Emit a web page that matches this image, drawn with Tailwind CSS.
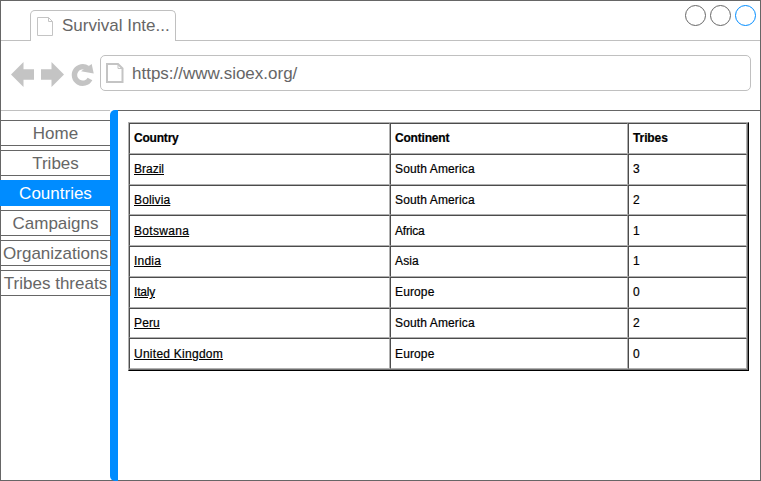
<!DOCTYPE html>
<html lang="en"><head><meta charset="utf-8"><title>Survival International</title>
<script src="https://cdn.jsdelivr.net/npm/@tailwindcss/browser@4"></script></head>
<body class="bg-white">
<div class="flex h-[481px] w-[761px] flex-col border border-[#666] font-['Liberation_Sans',Arial,sans-serif] text-[17px] text-[#666]">
  <header class="flex h-[40px] shrink-0 items-end">
    <div class="h-full w-[29px] border-b border-[#c0c0c0]"></div>
    <div class="flex h-[31px] w-[146px] items-start rounded-t-[5px] border border-b-0 border-[#c0c0c0] pt-[6px] pl-[6px]">
      <svg class="h-[20px] w-[18px] shrink-0" viewBox="0 0 18 20" fill="none" stroke="#c4c4c4"><path d="M.5 .5H11.5L15.5 4.5V18.5H.5ZM11.5 .5V4.5H15.5"/></svg>
      <span class="ml-[7px] leading-[18px] whitespace-nowrap">Survival Inte...</span>
    </div>
    <div class="flex h-full flex-1 justify-end border-b border-[#c0c0c0] pt-[4px] pr-[4px]">
      <svg class="h-[21px] w-[71px]" viewBox="0 0 71 21" fill="none" stroke="#666"><circle cx="10.5" cy="10.5" r="10"/><circle cx="35.5" cy="10.5" r="10"/><circle cx="60.5" cy="10.5" r="10" stroke="#008cff"/></svg>
    </div>
  </header>
  <div class="flex h-[69px] shrink-0 items-start pt-[14px]">
    <svg class="mt-[6px] h-[27px] w-[99px] shrink-0" viewBox="0 0 99 27" fill="#c4c4c4"><path d="M10 13.500 22.500 1V8.200H33V18.800H22.500V26ZM63 13.500 50.500 1V8.200H40V18.800H50.500V26Z"/><path d="M89 18A8.300 8.300 0 1 1 86.500 7.200" fill="none" stroke="#c4c4c4" stroke-width="5.400"/><path d="M90.700 3 92.700 12.500 80 10.300Z"/></svg>
    <div class="flex h-[36px] w-[651px] items-center rounded-[5px] border border-[#c0c0c0] pl-[5px]">
      <svg class="h-[20px] w-[18px] shrink-0" viewBox="0 0 18 20" fill="none" stroke="#c4c4c4" stroke-width="2"><path d="M1 1H12L16.500 5.500V19H1Z"/><path d="M12 1V5.500H16.500" stroke-width="1"/></svg>
      <span class="ml-[8px] pt-[2px] leading-[20px]">https://www.sioex.org/</span>
    </div>
  </div>
  <main class="flex h-[370px] shrink-0">
    <nav class="relative flex w-[109px] shrink-0 flex-col gap-[4px] border-t border-[#c0c0c0] pt-[9px] text-center leading-[26px] whitespace-nowrap">
      <a class="h-[26px] border-y border-[#666]">Home</a>
      <a class="h-[26px] border-y border-[#666]">Tribes</a>
      <a class="-ml-px h-[26px] border-y border-[#008cff] bg-[#008cff] pl-px text-white">Countries</a>
      <a class="-mr-[1px] h-[26px] border-y border-r border-[#666]">Campaigns</a>
      <a class="-mr-[1px] h-[26px] border-y border-r border-[#666]">Organizations</a>
      <a class="-mr-[1px] h-[26px] border-y border-r border-[#666]">Tribes threats</a>
    </nav>
    <div class="h-[371px] w-[8px] shrink-0 rounded-l-[5px] bg-[#008cff]"></div>
    <section class="flex-1 border-t border-[#666] pt-[11px] pl-[10px] text-[12px] leading-[14px] text-black">
      <div class="w-[621px] border border-t-[#b0b0b0] border-r-black border-b-black border-l-[#b0b0b0]">
        <div class="border-r border-b border-[#707070]">
          <div class="grid h-[246px] w-[618px] grid-cols-[261px_238px_119px] grid-rows-[31px_31px_30px_31px_31px_31px_30px_31px] tracking-[0.13px] [-webkit-text-stroke:0.2px_black] *:border *:border-t-[#4c4c4c] *:border-r-[#b0b0b0] *:border-b-[#b0b0b0] *:border-l-[#4c4c4c] *:pt-[7px] *:pl-[4px]">
            <b class="tracking-[-0.2px]">Country</b><b class="tracking-[-0.2px]">Continent</b><b class="tracking-[-0.1px]">Tribes</b>
            <div><a class="tracking-[0px] underline">Brazil</a></div><div>South America</div><div>3</div>
            <div><a class="underline">Bolivia</a></div><div>South America</div><div>2</div>
            <div class="!pt-[8px]"><a class="tracking-[0.3px] underline">Botswana</a></div><div class="tracking-[-0.2px] !pt-[8px]">Africa</div><div class="!pt-[8px]">1</div>
            <div><a class="tracking-[0.2px] underline">India</a></div><div>Asia</div><div>1</div>
            <div><a class="tracking-[-0.2px] underline">Italy</a></div><div>Europe</div><div>0</div>
            <div><a class="underline">Peru</a></div><div>South America</div><div>2</div>
            <div class="!pt-[8px]"><a class="tracking-[0.26px] underline">United Kingdom</a></div><div class="!pt-[8px]">Europe</div><div class="!pt-[8px]">0</div>
          </div>
        </div>
      </div>
    </section>
  </main>
</div>
</body></html>
